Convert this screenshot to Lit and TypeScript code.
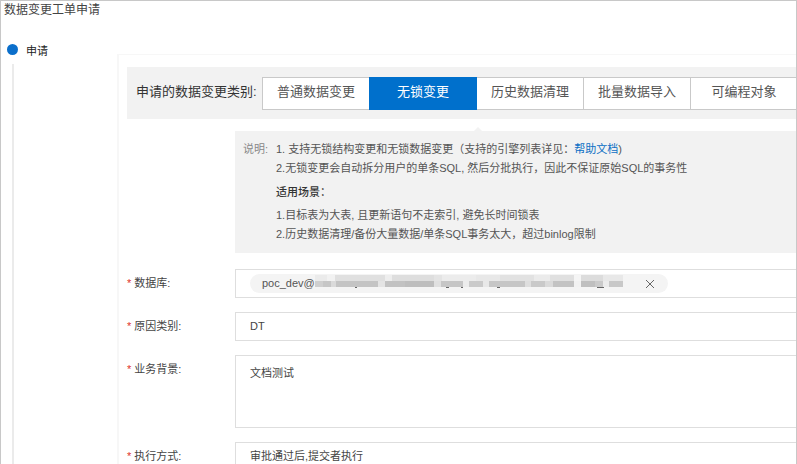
import { LitElement, html, css, svg } from "lit";
import { customElement, state } from "lit/decorators.js";

// Pixelated cover over the private part of the database name: [x, width, shade]
const TOP_BLOCKS: [number, number, string][] = [
  [0, 12, "#ebebeb"], [12, 8, "#f2f2f2"], [20, 50, "#e0e0e0"], [70, 7, "#eeeeee"],
  [77, 42, "#dedede"], [119, 8, "#e4e4e4"], [127, 34, "#ececec"], [161, 24, "#e8e8e8"],
  [185, 34, "#e2e2e2"], [219, 16, "#ebebeb"], [235, 24, "#e0e0e0"], [259, 7, "#f5f5f5"],
  [266, 22, "#dcdcdc"], [288, 20, "#e8e8e8"],
];
const LOW_BLOCKS: [number, number, string][] = [
  [0, 8, "#cfcfcf"], [8, 8, "#c6c6c6"], [16, 5, "#dadada"], [21, 42, "#c4c4c4"],
  [63, 7, "#e4e4e4"], [70, 20, "#c2c2c2"], [90, 29, "#bebebe"], [119, 7, "#e0e0e0"],
  [126, 22, "#c6c6c6"], [148, 6, "#ececec"], [154, 14, "#cacaca"], [168, 6, "#e8e8e8"],
  [174, 36, "#c6c6c6"], [210, 6, "#dedede"], [216, 14, "#c9c9c9"], [230, 8, "#dadada"],
  [238, 21, "#c3c3c3"], [259, 7, "#f2f2f2"], [266, 14, "#bfbfbf"], [280, 8, "#cacaca"],
  [288, 6, "#ececec"], [294, 14, "#c8c8c8"],
];

@customElement("app-root")
export class AppRoot extends LitElement {
  static styles = css`
    :host {
      display: block;
      font: 11px/19px "Liberation Sans", "Noto Sans CJK SC", sans-serif;
      color: #444;
    }
    * { box-sizing: border-box; }
    button, input, textarea, select {
      font: inherit;
      color: inherit;
      margin: 0;
      outline: none;
      border-radius: 0;
    }
    .page {
      height: 100vh;
      overflow: hidden;
      display: flex;
      flex-direction: column;
      background: #fff;
      border: 1px solid #c8c8c8;
      border-bottom: 0;
    }
    .title {
      margin: 0;
      padding: 0 3px;
      font-size: 12px;
      line-height: 18px;
      font-weight: 400;
    }
    .body {
      flex: 1;
      min-height: 0;
      display: grid;
      grid-template-columns: 116px minmax(0, 1fr);
      padding-top: 20px;
    }
    .steps {
      display: flex;
      flex-direction: column;
      padding-left: 6px;
    }
    .step { display: flex; align-items: center; gap: 8px; height: 21px; color: #222; }
    .step-name { padding-top: 3px; }
    .dot { width: 11px; height: 11px; border-radius: 50%; background: #0b6fcb; }
    .track { flex: 1; width: 2px; margin: 4px 0 0 5px; background: #ebebeb; }
    .panel {
      margin-top: 15px;
      padding: 12px 0 0 8px;
      border: solid #f7f7f7;
      border-width: 1px 0 0 2px;
    }
    .kinds {
      display: flex;
      align-items: center;
      height: 52px;
      padding-left: 9px;
      background: #f2f2f2;
      font-size: 13px;
    }
    .kinds-label { flex: 0 0 126px; padding-bottom: 4px; white-space: nowrap; color: #333; }
    .tabs { flex: 1; display: flex; min-width: 0; height: 33px; }
    .tab {
      flex: 0 0 108px;
      padding: 0 0 4px;
      margin-right: -1px;
      border: 1px solid #c9c9c9;
      background: #fff;
      color: #555;
      cursor: pointer;
    }
    .tab.on { position: relative; background: #0070cc; border-color: #0070cc; color: #fff; }
    .note {
      position: relative;
      display: flex;
      margin: 12px 0 16px 108px;
      padding: 9px 8px;
      background: #f2f2f2;
      color: #555;
    }
    .note::before {
      content: "";
      position: absolute;
      left: 239px;
      top: -4px;
      border: solid transparent;
      border-width: 0 4px 4px;
      border-bottom-color: #f2f2f2;
    }
    .note-label { flex: 0 0 33px; color: #888; }
    .note p { margin: 0; }
    .note .scene { margin: 5px 0 4px; color: #333; font-weight: 500; }
    .note a { color: #0b6fc4; text-decoration: none; }
    .form { display: grid; gap: 14px; }
    .row { display: grid; grid-template-columns: 108px minmax(0, 1fr); }
    .label { line-height: 29px; }
    .star { color: #e0322b; margin-right: 3px; }
    .field {
      display: block;
      width: 100%;
      height: 29px;
      padding: 0 14px;
      border: 1px solid #dedede;
      border-right: 0;
      background: #fff;
      appearance: none;
    }
    textarea.field { height: 73px; padding-top: 8px; resize: none; }
    .picker { display: flex; align-items: center; }
    .tag {
      display: flex;
      align-items: center;
      flex: 0 1 418px;
      height: 19px;
      padding: 0 12px;
      border-radius: 10px;
      background: #f4f4f4;
      color: #555;
    }
    .db { flex: 0 0 50px; }
    .mosaic { flex: 0 0 auto; display: block; }
    .remove {
      display: flex;
      margin-left: auto;
      padding: 0;
      border: 0;
      background: none;
      color: #666;
      cursor: pointer;
    }
  `;

  @state() private kind = 1;

  private kinds = ["普通数据变更", "无锁变更", "历史数据清理", "批量数据导入", "可编程对象"];

  private label(id: string, text: string) {
    return html`<label class="label" id="${id}-label" for=${id}><span class="star">*</span>${text}:</label>`;
  }

  render() {
    return html`
      <main class="page">
        <h1 class="title">数据变更工单申请</h1>
        <div class="body">
          <nav class="steps">
            <div class="step"><span class="dot"></span><span class="step-name">申请</span></div>
            <div class="track"></div>
          </nav>
          <section class="panel">
            <div class="kinds">
              <span class="kinds-label">申请的数据变更类别:</span>
              <div class="tabs">
                ${this.kinds.map(
                  (name, i) => html`<button type="button" class="tab ${i === this.kind ? "on" : ""}"
                    aria-pressed=${i === this.kind} @click=${() => (this.kind = i)}>${name}</button>`,
                )}
              </div>
            </div>
            <div class="note">
              <span class="note-label">说明:</span>
              <div>
                <p>1. 支持无锁结构变更和无锁数据变更（支持的引擎列表详见：<a href="#help">帮助文档</a>)</p>
                <p>2.无锁变更会自动拆分用户的单条SQL, 然后分批执行，因此不保证原始SQL的事务性</p>
                <p class="scene">适用场景：</p>
                <p>1.目标表为大表, 且更新语句不走索引, 避免长时间锁表</p>
                <p>2.历史数据清理/备份大量数据/单条SQL事务太大，超过binlog限制</p>
              </div>
            </div>
            <form class="form">
              <div class="row">
                ${this.label("database", "数据库")}
                <div class="field picker">
                  <span class="tag">
                    <span class="db">poc_dev@</span>
                    <svg class="mosaic" width="308" height="17" viewBox="0 0 308 17" aria-hidden="true">
                      ${TOP_BLOCKS.map(([x, w, c]) => svg`<rect x=${x} y="0" width=${w} height="6" fill=${c} />`)}
                      ${LOW_BLOCKS.map(([x, w, c]) => svg`<rect x=${x} y="6" width=${w} height="6" fill=${c} />`)}
                      <path d="M40 12.5h2M131 12.5h3M146 12.5h2M182 12.5h3M282 12.5h7" stroke="#666" />
                    </svg>
                    <button type="button" id="database" class="remove" aria-label="移除">
                      <svg width="12" height="12" viewBox="0 0 12 12" fill="none" stroke="currentColor">
                        <path d="M2 2l8 8M10 2l-8 8" />
                      </svg>
                    </button>
                  </span>
                </div>
              </div>
              <div class="row">
                ${this.label("reason", "原因类别")}
                <select id="reason" class="field"><option>DT</option></select>
              </div>
              <div class="row">
                ${this.label("background", "业务背景")}
                <textarea id="background" class="field" .value=${"文档测试"}></textarea>
              </div>
              <div class="row">
                ${this.label("mode", "执行方式")}
                <select id="mode" class="field"><option>审批通过后,提交者执行</option></select>
              </div>
            </form>
          </section>
        </div>
      </main>
    `;
  }
}
